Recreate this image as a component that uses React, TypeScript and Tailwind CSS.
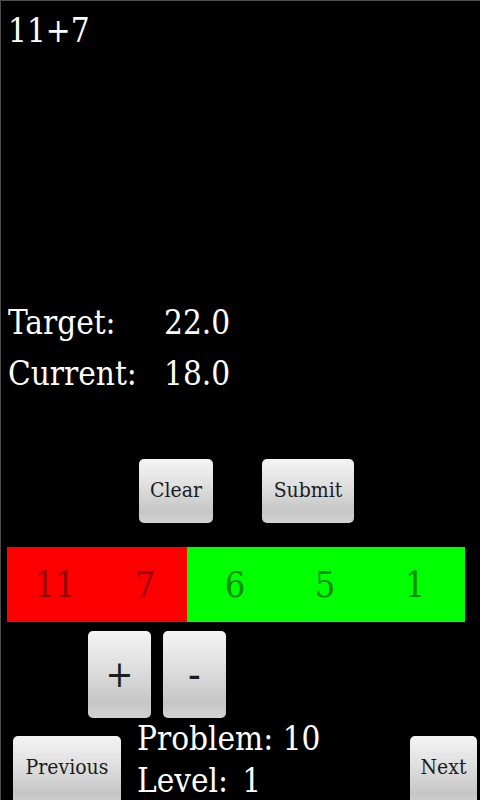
const serif = "font-['DejaVu_Serif_Condensed','DejaVu_Serif',serif] [font-stretch:condensed]";

const btn =
  "flex items-center justify-center rounded-[5px] text-[#1c1c1c] bg-[linear-gradient(to_bottom,#f4f4f4_0%,#e0e0e0_40%,#c6c6c6_82%,#d2d2d2_100%)]";

function Cell({ n, tone }: { n: string; tone: "red" | "green" }) {
  return (
    <div
      className={`w-[90px] shrink-0 pl-[6px] text-center text-[36px] leading-[75px] ${
        tone === "red" ? "text-[#960000]" : "text-[#0b8d0b]"
      }`}
    >
      {n}
    </div>
  );
}

export default function App() {
  return (
    <div className={`w-[480px] h-[800px] overflow-hidden bg-black border-t border-l border-[#4d4d4d] text-white ${serif}`}>
      <div className="h-[303px] pl-[7px] pt-[11px] text-[33px] leading-[38px]">11+7</div>

      <div className="flex h-[51px] pl-[7px] text-[33px] leading-[38px]">
        <span className="w-[156px]">Target:</span>
        <span>22.0</span>
      </div>
      <div className="flex h-[51px] pl-[7px] text-[33px] leading-[38px]">
        <span className="w-[156px]">Current:</span>
        <span>18.0</span>
      </div>

      <div className="mt-[53px] flex gap-[49px] pl-[138px]">
        <button className={`${btn} h-[64px] w-[74px] text-[21px]`}>Clear</button>
        <button className={`${btn} h-[64px] w-[92px] text-[21px]`}>Submit</button>
      </div>

      <div className="mt-[24px] ml-[6px] flex h-[75px] w-[458px]">
        <div className="flex w-[180px] bg-[#ff0000]">
          <Cell n="11" tone="red" />
          <Cell n="7" tone="red" />
        </div>
        <div className="flex flex-1 bg-[#00ff00]">
          <Cell n="6" tone="green" />
          <Cell n="5" tone="green" />
          <Cell n="1" tone="green" />
        </div>
      </div>

      <div className="mt-[9px] ml-[87px] flex gap-[12px]">
        <button className={`${btn} h-[87px] w-[63px] text-[37px]`}>+</button>
        <button className={`${btn} h-[87px] w-[63px] text-[42px]`}>-</button>
      </div>

      <div className="flex items-start">
        <button className={`${btn} ml-[12px] mt-[18px] h-[70px] w-[108px] pb-[6px] text-[21px]`}>
          Previous
        </button>
        <div className="ml-[16px] mt-[0px] text-[33px] leading-[42px]">
          <div>
            Problem: <span>10</span>
          </div>
          <div>
            Level:<span className="ml-[14px]">1</span>
          </div>
        </div>
        <button className={`${btn} ml-auto mr-[3px] mt-[18px] h-[70px] w-[67px] pb-[6px] text-[21px]`}>
          Next
        </button>
      </div>
    </div>
  );
}
